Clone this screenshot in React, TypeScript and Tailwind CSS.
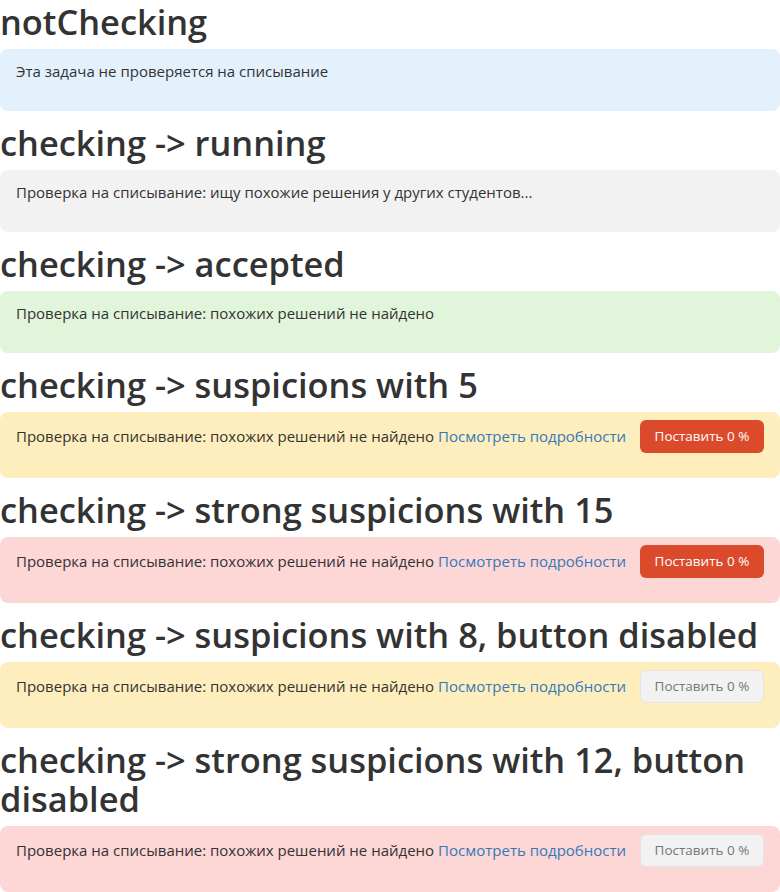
const FONT = "font-['Open_Sans','Noto_Sans',sans-serif]";

type Tone = "blue" | "grey" | "green" | "yellow" | "red";

const toneBg: Record<Tone, string> = {
  blue: "bg-[#e3f1fd]",
  grey: "bg-[#f2f2f2]",
  green: "bg-[#e1f5da]",
  yellow: "bg-[#feeebd]",
  red: "bg-[#fdd6d6]",
};

function Status({
  tone,
  text,
  details,
  button,
}: {
  tone: Tone;
  text: string;
  details?: boolean;
  button?: "active" | "disabled";
}) {
  return (
    <div className={`${toneBg[tone]} rounded-lg pl-4 pr-4 pt-2 pb-[25px] mb-[10px]`}>
      <div className={`flex items-center ${button ? "h-[33px]" : "h-[29px]"}`}>
        <span className="text-[15px] text-[#333]">
          {text}
          {details && (
            <a href="#" className="text-[#337ab7] ml-[4px]">
              Посмотреть подробности
            </a>
          )}
        </span>
        {button && (
          <button
            disabled={button === "disabled"}
            className={
              button === "active"
                ? "ml-auto h-[33px] w-[124px] rounded-md bg-[#db4a2b] text-white text-[13.5px]"
                : "ml-auto h-[33px] w-[124px] rounded-md bg-[#f2f2f2] border border-[#e3e3e3] text-[#777] text-[13.5px]"
            }
          >
            Поставить 0 %
          </button>
        )}
      </div>
    </div>
  );
}

function Title({ children }: { children: React.ReactNode }) {
  return (
    <h1 className="text-[34.4px] leading-[39px] font-semibold text-[#333] pt-[2px] mb-[8px]">
      {children}
    </h1>
  );
}

const found = "Проверка на списывание: похожих решений не найдено";

export default function App() {
  return (
    <div className={`${FONT} w-[780px] bg-white`}>
      <Title>notChecking</Title>
      <Status tone="blue" text="Эта задача не проверяется на списывание" />
      <Title>checking -&gt; running</Title>
      <Status tone="grey" text="Проверка на списывание: ищу похожие решения у других студентов..." />
      <Title>checking -&gt; accepted</Title>
      <Status tone="green" text={found} />
      <Title>checking -&gt; suspicions with 5</Title>
      <Status tone="yellow" text={found} details button="active" />
      <Title>checking -&gt; strong suspicions with 15</Title>
      <Status tone="red" text={found} details button="active" />
      <Title>checking -&gt; suspicions with 8, button disabled</Title>
      <Status tone="yellow" text={found} details button="disabled" />
      <Title>checking -&gt; strong suspicions with 12, button disabled</Title>
      <Status tone="red" text={found} details button="disabled" />
    </div>
  );
}
